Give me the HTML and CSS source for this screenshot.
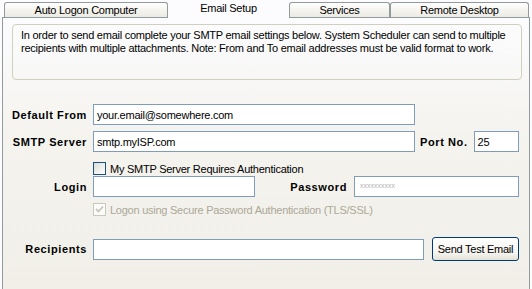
FILE: index.html
```html
<!DOCTYPE html>
<html>
<head>
<meta charset="utf-8">
<link rel="stylesheet" href="styles.css">
</head>
<body>
<div class="tabs">
  <div class="tab tab-auto">Auto Logon Computer</div>
  <div class="tab tab-email active">Email Setup</div>
  <div class="tab tab-services">Services</div>
  <div class="tab tab-remote">Remote Desktop</div>
</div>
<div class="panel">
  <div class="info">In order to send email complete your SMTP email settings below. System Scheduler can send to multiple recipients with multiple attachments. Note: From and To email addresses must be valid format to work.</div>

  <div class="row row-from">
    <div class="label">Default From</div>
    <div class="input wide">your.email@somewhere.com</div>
  </div>

  <div class="row row-smtp">
    <div class="label">SMTP Server</div>
    <div class="input wide">smtp.myISP.com</div>
    <div class="label-inline port-label">Port No.</div>
    <div class="input port">25</div>
  </div>

  <div class="row check-row row-auth">
    <span class="checkbox"></span>
    <span class="check-text">My SMTP Server Requires Authentication</span>
  </div>

  <div class="row row-login">
    <div class="label">Login</div>
    <div class="input login"></div>
    <div class="label pass-label">Password</div>
    <div class="input pass"><span class="mask">xxxxxxxxxx</span></div>
  </div>

  <div class="row check-row row-tls disabled">
    <span class="checkbox checked">
      <svg width="9" height="9" viewBox="0 0 9 9"><path d="M1 4 L3.5 6.5 L8 1.5" fill="none" stroke="#c9c7ba" stroke-width="1.8"/></svg>
    </span>
    <span class="check-text">Logon using Secure Password Authentication (TLS/SSL)</span>
  </div>

  <div class="row row-recip">
    <div class="label">Recipients</div>
    <div class="input recip"></div>
    <div class="button">Send Test Email</div>
  </div>
</div>
</body>
</html>
```

FILE: styles.css
```css
html, body {
  margin: 0;
  padding: 0;
  background: #fcfcfe;
}
body {
  width: 532px;
  height: 289px;
  overflow: hidden;
  font-family: "Liberation Sans", Arial, sans-serif;
  font-size: 11px;
  letter-spacing: -0.25px;
  color: #000;
}
.tabs {
  display: flex;
  height: 17px;
  padding-left: 4px;
}
.tab {
  box-sizing: border-box;
  margin-top: 2px;
  height: 15px;
  border: 1px solid #919b9c;
  border-bottom: none;
  border-radius: 3px 3px 0 0;
  background: linear-gradient(#ffffff, #f3f2ec 60%, #ebeae3);
  display: flex;
  align-items: center;
  justify-content: center;
  line-height: 13px;
}
.tab-auto { width: 164px; }
.tab-email { width: 121px; }
.tab-services { width: 101px; }
.tab-remote { width: 139px; }
.tab.active {
  margin-top: 0;
  height: 18px;
  border: none;
  background: #fcfcfe;
  position: relative;
  z-index: 1;
  padding-bottom: 2px;
}
.panel {
  box-sizing: border-box;
  margin-left: 2px;
  width: 528px;
  height: 272px;
  border: 1px solid #919b9c;
  border-bottom: none;
  background: linear-gradient(#fcfcfe, #f4f3ee 45%, #f1efe8);
  display: flex;
  flex-direction: column;
}
.info {
  box-sizing: border-box;
  margin: 6px 0 0 9px;
  width: 510px;
  height: 56px;
  border: 1px solid #d0d0bf;
  border-radius: 4px;
  padding: 4px 8px 0 8px;
  line-height: 13px;
}
.row {
  display: flex;
  align-items: center;
}
.row-from { margin-top: 24px; }
.row-smtp { margin-top: 6px; }
.row-auth { margin-top: 10px; height: 13px; }
.row-login { margin-top: 1px; }
.row-tls { margin-top: 6px; height: 13px; }
.row-recip { margin-top: 21px; height: 24px; }

.label {
  width: 84px;
  text-align: right;
  font-weight: bold;
  margin-right: 6px;
  letter-spacing: 0.6px;
}
.label-inline {
  font-weight: bold;
  letter-spacing: 0.6px;
}
.input {
  box-sizing: border-box;
  height: 21px;
  border: 1px solid #7f9db9;
  background: #fff;
  padding-left: 3px;
  display: flex;
  align-items: center;
  white-space: nowrap;
}
.wide { width: 322px; }
.port-label { margin-left: 5px; }
.port { width: 45px; margin-left: 6px; }
.login { width: 162px; }
.pass-label { width: 92px; margin-right: 7px; }
.pass { width: 165px; }
.mask {
  font-size: 7px;
  color: #b4b4b4;
  letter-spacing: 0;
  padding-left: 2px;
  margin-top: -3px;
}
.recip { width: 331px; }
.button {
  box-sizing: border-box;
  margin-left: 8px;
  width: 87px;
  height: 24px;
  border: 1px solid #003c74;
  border-radius: 3px;
  background: linear-gradient(#ffffff, #f4f3ee 70%, #e3e1d6);
  display: flex;
  align-items: center;
  justify-content: center;
  white-space: nowrap;
}
.check-row {
  padding-left: 90px;
}
.checkbox {
  box-sizing: border-box;
  width: 13px;
  height: 13px;
  border: 1px solid #1c5180;
  background: linear-gradient(135deg, #dcdcd7, #ffffff);
  margin-right: 4px;
  display: flex;
  align-items: center;
  justify-content: center;
}
.disabled .checkbox {
  border-color: #cac8bb;
  background: #fcfcfb;
}
.disabled .check-text {
  color: #aca899;
}
```
